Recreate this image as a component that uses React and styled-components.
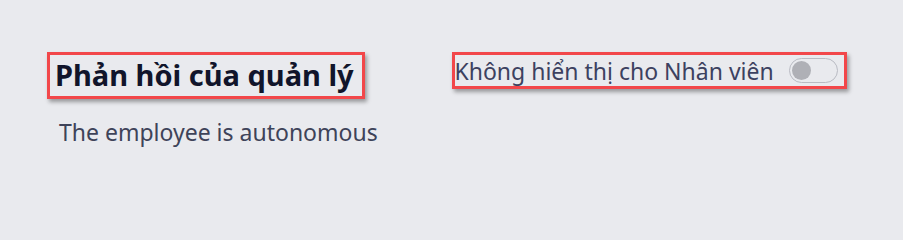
import React from "react";
import styled, { createGlobalStyle } from "styled-components";

const GlobalStyle = createGlobalStyle`
  html, body { margin: 0; padding: 0; }
  body {
    background: #e9eaee;
    font-family: "Noto Sans", "Open Sans", sans-serif;
    width: 903px;
    height: 237px;
    overflow: hidden;
  }
`;

const Page = styled.div`
  padding-top: 52px;
`;

const HeaderRow = styled.div`
  display: grid;
  grid-template-columns: 1fr 1fr;
  align-items: start;
`;

const LeftCell = styled.div`
  padding-left: 47px;
`;

const Marked = styled.div`
  display: inline-flex;
  align-items: center;
  box-sizing: border-box;
  border: 3px solid #f2474a;
  box-shadow: 2px 3px 4px rgba(0, 0, 0, 0.35);
  height: ${(p) => p.$h}px;
  padding: ${(p) => p.$pad};
`;

const Heading = styled.h2`
  margin: 0;
  font-size: 29px;
  line-height: 1.2;
  font-weight: 700;
  color: #11152b;
  white-space: nowrap;
`;

const ToggleLabel = styled.span`
  font-size: 23px;
  line-height: 1.2;
  padding-top: 3px;
  color: #3c4160;
  white-space: nowrap;
`;

const Switch = styled.span`
  box-sizing: border-box;
  width: 49px;
  height: 25px;
  border: 1px solid #b9bbc3;
  border-radius: 13px;
  margin-left: 15px;
  display: flex;
  align-items: center;
  padding-left: 2px;
`;

const Thumb = styled.span`
  width: 19px;
  height: 19px;
  border-radius: 50%;
  background: #afb0b6;
`;

const Body = styled.p`
  margin: 20px 0 0 59px;
  font-size: 23px;
  line-height: 1.2;
  color: #3e4359;
`;

export default function App() {
  return (
    <>
      <GlobalStyle />
      <Page>
        <HeaderRow>
          <LeftCell>
            <Marked $h={47} $pad="0 8px 0 5px">
              <Heading>Phản hồi của quản lý</Heading>
            </Marked>
          </LeftCell>
          <div>
            <Marked $h={37} $pad="0 6px 0 0">
              <ToggleLabel>Không hiển thị cho Nhân viên</ToggleLabel>
              <Switch>
                <Thumb />
              </Switch>
            </Marked>
          </div>
        </HeaderRow>
        <Body>The employee is autonomous</Body>
      </Page>
    </>
  );
}
